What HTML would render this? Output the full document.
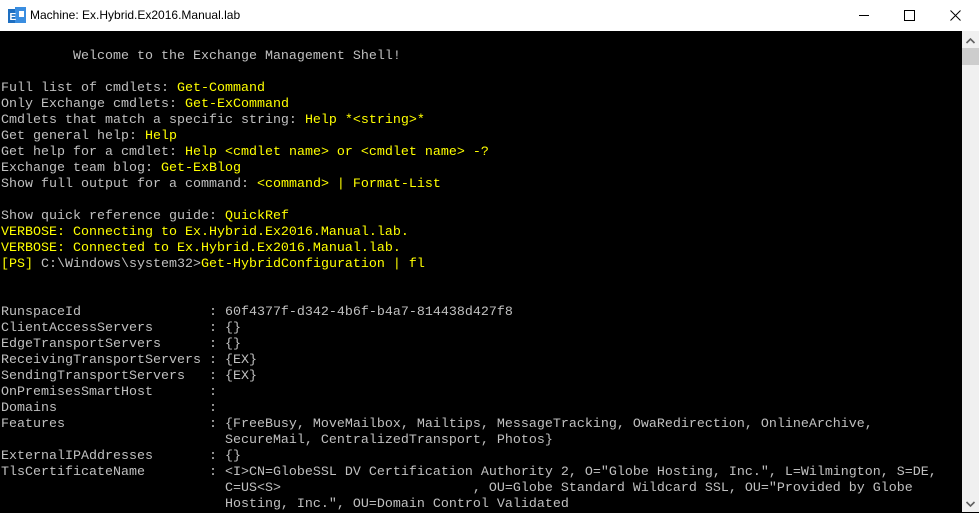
<!DOCTYPE html>
<html><head><meta charset="utf-8"><style>
*{margin:0;padding:0}
body{width:979px;height:512px;overflow:hidden;background:#000;position:relative;font-family:"Liberation Sans",sans-serif}
#tb{position:absolute;left:0;top:0;width:979px;height:31px;background:#fff}
#tt{position:absolute;left:30px;top:8px;font-size:12px;color:#000}
#con{position:absolute;left:0;top:31px;width:962px;height:481px;background:#000}
pre{position:absolute;left:1px;top:18px;font-family:"Liberation Mono",monospace;font-size:13.33px;line-height:16px;color:#c0c0c0;white-space:pre}
.y{color:#ffff00}
#sb{position:absolute;left:962px;top:31px;width:17px;height:481px;background:#f0f0f0}
#th{position:absolute;left:962px;top:48px;width:17px;height:17px;background:#cdcdcd}
</style></head><body>
<div id="tb">
<svg style="position:absolute;left:8px;top:7px" width="18" height="18" viewBox="0 0 18 18"><rect x="0" y="2" width="10" height="14" fill="#1e6fc1"/><rect x="7" y="0" width="11" height="16" fill="#3a8de0"/><text x="1.5" y="13" font-size="10" fill="#fff" font-family="Liberation Sans" font-weight="bold">E</text><rect x="11" y="4" width="5" height="6" fill="#fff"/></svg>
<div id="tt">Machine: Ex.Hybrid.Ex2016.Manual.lab</div>
<div style="position:absolute;left:859px;top:15px;width:10px;height:1px;background:#000"></div>
<div style="position:absolute;left:904px;top:10px;width:9px;height:9px;border:1px solid #000"></div>
<svg style="position:absolute;left:950px;top:10px" width="11" height="11"><path d="M0.5 0.5L10.5 10.5M10.5 0.5L0.5 10.5" stroke="#000" stroke-width="1"/></svg>
</div>
<div id="con"><pre>         Welcome to the Exchange Management Shell!

Full list of cmdlets: <span class="y">Get-Command</span>
Only Exchange cmdlets: <span class="y">Get-ExCommand</span>
Cmdlets that match a specific string: <span class="y">Help *&lt;string&gt;*</span>
Get general help: <span class="y">Help</span>
Get help for a cmdlet: <span class="y">Help &lt;cmdlet name&gt; or &lt;cmdlet name&gt; -?</span>
Exchange team blog: <span class="y">Get-ExBlog</span>
Show full output for a command: <span class="y">&lt;command&gt; | Format-List</span>

Show quick reference guide: <span class="y">QuickRef</span>
<span class="y">VERBOSE: Connecting to Ex.Hybrid.Ex2016.Manual.lab.</span>
<span class="y">VERBOSE: Connected to Ex.Hybrid.Ex2016.Manual.lab.</span>
<span class="y">[PS]</span> C:\Windows\system32&gt;<span class="y">Get-HybridConfiguration | fl</span>


RunspaceId                : 60f4377f-d342-4b6f-b4a7-814438d427f8
ClientAccessServers       : {}
EdgeTransportServers      : {}
ReceivingTransportServers : {EX}
SendingTransportServers   : {EX}
OnPremisesSmartHost       :
Domains                   :
Features                  : {FreeBusy, MoveMailbox, Mailtips, MessageTracking, OwaRedirection, OnlineArchive,
                            SecureMail, CentralizedTransport, Photos}
ExternalIPAddresses       : {}
TlsCertificateName        : &lt;I&gt;CN=GlobeSSL DV Certification Authority 2, O="Globe Hosting, Inc.", L=Wilmington, S=DE,
                            C=US&lt;S&gt;                        , OU=Globe Standard Wildcard SSL, OU="Provided by Globe
                            Hosting, Inc.", OU=Domain Control Validated</pre></div>
<div id="sb"></div><div id="th"></div>
<svg style="position:absolute;left:965px;top:37px" width="11" height="8"><path d="M1.5 6L5.5 2L9.5 6" stroke="#606060" stroke-width="1.6" fill="none"/></svg>
<svg style="position:absolute;left:965px;top:500px" width="11" height="8"><path d="M1.5 2L5.5 6L9.5 2" stroke="#606060" stroke-width="1.6" fill="none"/></svg>
</body></html>
